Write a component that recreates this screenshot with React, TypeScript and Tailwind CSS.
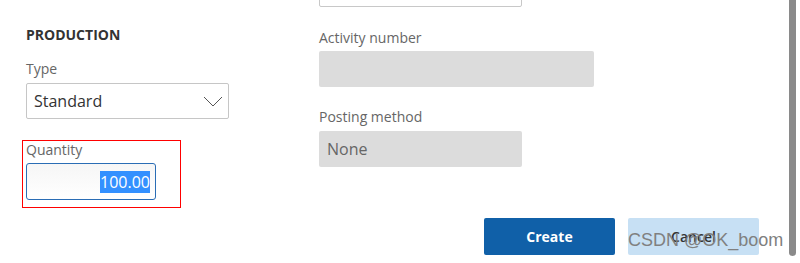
import React from 'react'

const font = { fontFamily: '"Open Sans", "Noto Sans", sans-serif' }

function Label({ children }: { children: React.ReactNode }) {
  return <div className="text-[14px] leading-[19px] text-[#666666]">{children}</div>
}

export default function App() {
  return (
    <div className="relative w-[800px] h-[263px] overflow-hidden bg-white" style={font}>
      <div className="flex pl-[26px]">
        {/* Left column */}
        <div className="w-[293px] flex flex-col items-start pt-[25px]">
          <div className="text-[14px] leading-[20px] font-bold text-[#333333]">PRODUCTION</div>
          <div className="mt-[14px]">
            <Label>Type</Label>
          </div>
          <div className="mt-[5px] w-[203px] h-[36px] border border-[#c6c6c6] rounded-[2px] flex items-center justify-between pl-[7px] pr-[5px]">
            <span className="text-[16px] text-[#333333]">Standard</span>
            <svg width="20" height="11" viewBox="0 0 20 11" fill="none">
              <polyline points="1,1 10,10 19,1" stroke="#555555" strokeWidth="1" />
            </svg>
          </div>

          {/* Quantity, boxed in red */}
          <div className="mt-[21px] -ml-[4px] w-[159px] border border-[#ff0000] pl-[3px] pb-[7px]">
            <div className="text-[14px] leading-[16px] text-[#666666] mt-[1px]">Quantity</div>
            <div className="mt-[5px] w-[130px] h-[37px] border border-[#2a6db5] rounded-[3px] bg-gradient-to-b from-[#f6f6f6] to-white flex items-center justify-end pr-[5px]">
              <span className="bg-[#3390ff] text-white text-[16px] leading-[22px]">100.00</span>
            </div>
          </div>
        </div>

        {/* Right column */}
        <div className="flex flex-col items-start">
          <div className="-mt-[29px] w-[203px] h-[36px] border border-[#c8c8c8] rounded-[2px]" />
          <div className="mt-[21px]">
            <Label>Activity number</Label>
          </div>
          <div className="mt-[4px] w-[275px] h-[36px] bg-[#dcdcdc] rounded-[2px]" />
          <div className="mt-[20px]">
            <Label>Posting method</Label>
          </div>
          <div className="mt-[5px] w-[203px] h-[36px] bg-[#dcdcdc] rounded-[2px] flex items-center pl-[8px]">
            <span className="text-[16px] text-[#666666]">None</span>
          </div>
        </div>
      </div>

      {/* Footer buttons */}
      <div className="mt-[10px] flex justify-end gap-[13px] pr-[41px]">
        <button className="w-[131px] h-[37px] rounded-[2px] bg-[#1060a8] text-white text-[14px] font-bold">
          Create
        </button>
        <button className="w-[131px] h-[37px] rounded-[2px] bg-[#c7e0f4] text-[#333333] text-[14px] font-semibold">
          Cancel
        </button>
      </div>

      {/* Watermark */}
      <div
        className="absolute left-[628px] top-[230px] text-[18px] leading-[20px] text-[#808080] whitespace-nowrap"
        style={{ fontFamily: '"Liberation Sans", Arial, sans-serif' }}
      >
        CSDN @OK_boom
      </div>

      {/* Scrollbar thumb */}
      <div className="absolute left-[789px] top-0 w-[7px] h-[256px] rounded-b-full bg-[#8a8a8a]" />
    </div>
  )
}
